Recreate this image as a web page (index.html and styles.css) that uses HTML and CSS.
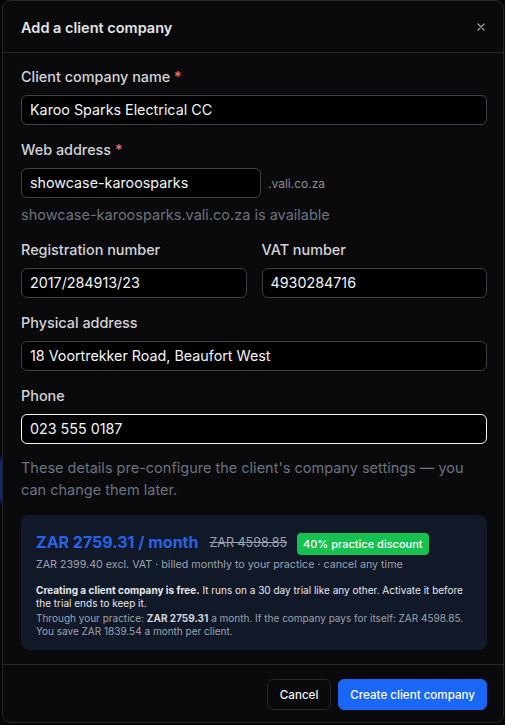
FILE: index.html
```html
<!DOCTYPE html>
<html lang="en">
<head>
<meta charset="utf-8">
<title>Add a client company</title>
<link rel="stylesheet" href="styles.css">
</head>
<body>
<div class="backdrop-glow"></div>
<div class="modal">
  <header class="modal-header">
    <h2 class="modal-title">Add a client company</h2>
    <button class="close" aria-label="Close">
      <svg width="8" height="8" viewBox="0 0 8 8"><path d="M1 1L7 7M7 1L1 7" stroke="#a1a1aa" stroke-width="1.2" stroke-linecap="round"/></svg>
    </button>
  </header>
  <div class="modal-body">
    <div class="field">
      <label class="label">Client company name <span class="req">*</span></label>
      <div class="input">Karoo Sparks Electrical CC</div>
    </div>
    <div class="field">
      <label class="label">Web address <span class="req">*</span></label>
      <div class="addr-row">
        <div class="input addr">showcase-karoosparks</div>
        <span class="suffix">.vali.co.za</span>
      </div>
      <div class="hint">showcase-karoosparks.vali.co.za is available</div>
    </div>
    <div class="field two-col">
      <div class="col">
        <label class="label">Registration number</label>
        <div class="input">2017/284913/23</div>
      </div>
      <div class="col">
        <label class="label">VAT number</label>
        <div class="input">4930284716</div>
      </div>
    </div>
    <div class="field">
      <label class="label">Physical address</label>
      <div class="input">18 Voortrekker Road, Beaufort West</div>
    </div>
    <div class="field">
      <label class="label">Phone</label>
      <div class="input focused">023 555 0187</div>
    </div>
    <p class="help">These details pre-configure the client's company settings — you can change them later.</p>
    <div class="price-card">
      <div class="price-row">
        <span class="price">ZAR 2759.31 / month</span>
        <span class="old-price">ZAR 4598.85</span>
        <span class="badge">40% practice discount</span>
      </div>
      <div class="price-sub">ZAR 2399.40 excl. VAT · billed monthly to your practice · cancel any time</div>
      <p class="note"><strong>Creating a client company is free.</strong> It runs on a 30 day trial like any other. Activate it before the trial ends to keep it.</p>
      <p class="note muted">Through your practice: <strong>ZAR 2759.31</strong> a month. If the company pays for itself: ZAR 4598.85. You save ZAR 1839.54 a month per client.</p>
    </div>
  </div>
  <footer class="modal-footer">
    <button class="btn btn-ghost">Cancel</button>
    <button class="btn btn-primary">Create client company</button>
  </footer>
</div>
</body>
</html>
```
FILE: styles.css
```css
* { box-sizing: border-box; }
html, body { margin: 0; padding: 0; }
body {
  background: #050507;
  font-family: Inter, "Noto Sans", sans-serif;
  color: #e4e4e7;
  padding: 0 1px 2px 2px;
  height: 725px;
  overflow: hidden;
}
.backdrop-glow {
  position: absolute;
  left: -6px;
  top: 458px;
  width: 8px;
  height: 44px;
  background: #1d4ed8;
  filter: blur(3px);
  opacity: 0.8;
}
.modal {
  position: relative;
  height: 723px;
  background: #0a0a0c;
  border: 1px solid #27272a;
  border-radius: 8px;
  display: flex;
  flex-direction: column;
}
.modal-header {
  height: 52px;
  flex: none;
  display: flex;
  align-items: center;
  justify-content: space-between;
  padding: 0 14px 0 18px;
  border-bottom: 1px solid #27272a;
}
.modal-title {
  margin: 0;
  font-size: 14.5px;
  font-weight: 600;
  color: #e4e4e7;
  padding-top: 1px;
}
.close {
  background: none;
  border: 0;
  padding: 4px;
  display: flex;
  cursor: pointer;
}
.modal-body {
  flex: 1;
  padding: 14px 16px 0 18px;
}
.field { margin-bottom: 15px; }
.label {
  display: block;
  font-size: 14.4px;
  line-height: 20px;
  font-weight: 500;
  color: #d4d4d8;
  margin-bottom: 8px;
}
.req { color: #f87171; }
.input {
  height: 30px;
  border: 1px solid #3f3f46;
  border-radius: 6px;
  background: #000;
  font-size: 14.3px;
  line-height: 28px;
  padding: 0 8px;
  color: #f4f4f5;
}
.input.focused {
  border: 1.5px solid #f4f4f5;
  line-height: 27px;
}
.addr-row {
  display: flex;
  align-items: center;
  gap: 7px;
}
.input.addr { width: 240px; }
.suffix {
  font-size: 12px;
  color: #8b8b94;
}
.hint {
  margin-top: 7px;
  font-size: 14.5px;
  line-height: 20px;
  color: #6b7280;
}
.two-col {
  display: grid;
  grid-template-columns: 1fr 1fr;
  gap: 15px;
}
.help {
  margin: -2px 0 14px;
  font-size: 14.5px;
  line-height: 22px;
  color: #6b7280;
}
.price-card {
  background: #111827;
  border-radius: 8px;
  padding: 13px 14px 12px 15px;
}
.price-row {
  display: flex;
  align-items: center;
}
.price {
  font-size: 16px;
  font-weight: 700;
  color: #2563eb;
  line-height: 24px;
}
.old-price {
  font-size: 12.5px;
  color: #9ca3af;
  text-decoration: line-through;
  margin: 2px 0 0 11px;
}
.badge {
  background: #16c150;
  color: #fff;
  font-size: 11px;
  font-weight: 500;
  border-radius: 4px;
  padding: 3px 6px;
  line-height: 16px;
  margin: 5px 0 0 10px;
}
.price-sub {
  margin-top: 3px;
  font-size: 10.7px;
  line-height: 14px;
  color: #9ca3af;
}
.note {
  margin: 12px 0 0;
  font-size: 10px;
  line-height: 13px;
  color: #e5e7eb;
}
.note strong { font-weight: 700; }
.note.muted {
  margin-top: 2px;
  color: #9ca3af;
}
.note.muted strong { color: #d1d5db; }
.modal-footer {
  flex: none;
  border-top: 1px solid #27272a;
  display: flex;
  justify-content: flex-end;
  gap: 7px;
  padding: 14px 16px 12px;
}
.btn {
  height: 31px;
  border-radius: 6px;
  font-family: inherit;
  font-size: 11.6px;
  font-weight: 500;
  padding: 0 11px;
  cursor: pointer;
}
.btn-ghost {
  background: #0a0a0c;
  border: 1px solid #27272a;
  color: #f4f4f5;
  padding: 0 12px;
}
.btn-primary {
  background: #1a66f5;
  border: 1px solid #1a66f5;
  color: #fff;
}
```
